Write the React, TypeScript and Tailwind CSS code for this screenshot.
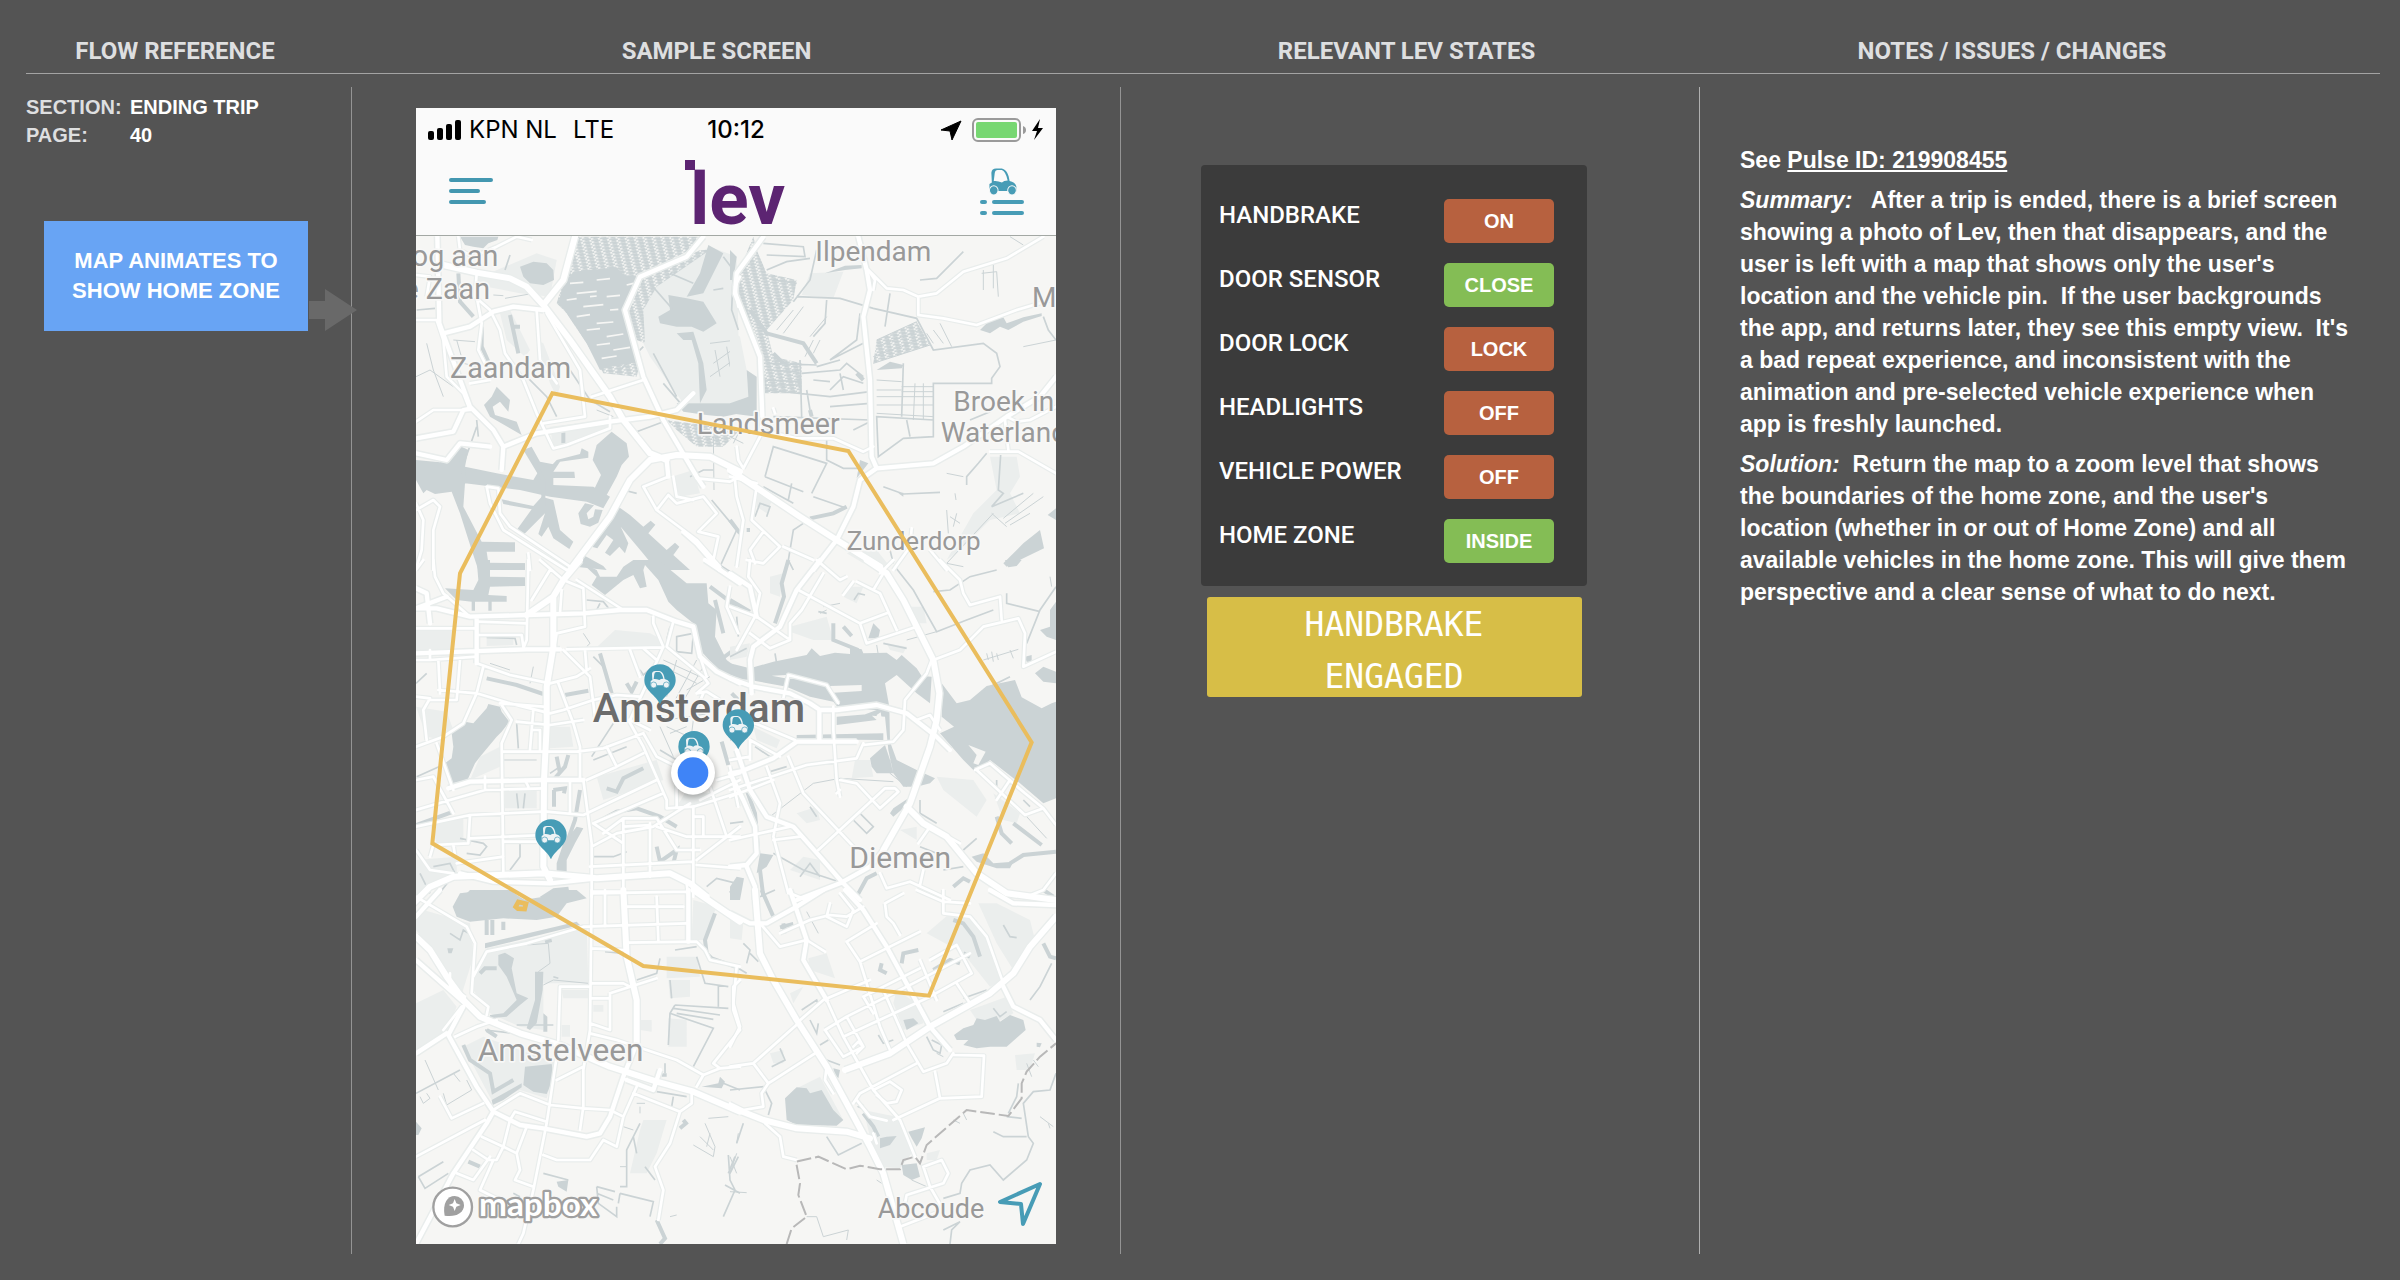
type Tile = {
  at: string;
  park: string;
  water: string;
  hatch?: string;
  hair: string;
  canal: string;
  basin: string;
  highway: string;
  major: string;
  minor: string;
};

// The base map is kept as six tiles, each in its own local coordinates.
const tiles: Tile[] = [
  {
    at: "translate(0 0)",
    park: "M700 340L695 240L740 170L830 90L900 50L980 80L990 520L820 520L770 450L720 380ZM190 150L380 70L440 90L420 200L330 190L230 170ZM420 590L590 570L600 600L480 650L430 655ZM270 250L300 240L360 360L345 380L290 330ZM785 740L850 720L870 790L810 800ZM380 330L400 340L450 470L440 500L420 460Z",
    water:
      "M150 20L265 20L262 30L235 40L220 55L190 50L165 45ZM330 110L370 95L410 100L430 120L432 150L400 165L360 160L340 140ZM745 260L780 240L775 195L830 205L880 215L920 280L880 305L845 290L800 290L750 280ZM800 310L850 305L880 400L890 480L870 520L865 400L845 330L820 330ZM895 45L940 70L910 130L880 190L830 200L870 130ZM800 520L960 520L990 530L990 550L940 560L890 555L820 545ZM260 470L300 510L295 545L270 515L248 530L255 555L320 575L335 615L300 595L240 560L222 525L245 500ZM18 690L90 697L155 650L175 660L165 710L260 730L370 750L382 730L340 660L365 650L390 695L430 703L430 765L550 770L600 800L580 835L530 815L420 800L330 780L165 760L160 830L215 935L315 937L315 965L230 965L235 998L345 1000L345 1020L205 1020L185 960L150 850L125 785L75 792L50 780L40 790L18 750ZM275 808L370 828L395 800L430 810L450 900L490 935L478 957L430 925L415 890L395 920L385 912L405 850L340 915L320 900L365 838L280 822ZM420 712L440 690L510 672L515 655L535 665L535 683L450 695L430 725L493 725L495 744L410 744ZM605 605L650 640L657 680L635 705L620 740L590 795L550 783L573 735L548 690L560 645ZM505 850L525 820L552 826L530 850L535 868L550 860L555 838L578 840L565 878L540 890L512 882ZM625 830L660 855L700 890L722 872L736 884L715 910L770 960L795 938L808 950L790 975L840 1020L740 1020L695 965L632 890L655 940L645 970L628 950L600 978L585 968L610 930L590 915L562 955L545 950L600 880ZM495 1010L520 975L580 1008L590 1020Z",
    hatch:
      "M500 20L880 20L860 50L770 95L690 140L645 240L690 400L680 440L580 430L530 340L470 250L440 220ZM695 150L770 110L870 60L900 60L740 170L700 240L705 340L680 330L655 250ZM770 570L990 600L940 650L860 650L800 600Z",
    hair: "M50 340L70 420L100 500M18 440L60 420L130 470M130 330L195 335M140 330L160 400L205 410M900 340L980 330M910 400L980 350M900 440L985 380M915 360L930 440M950 350L960 410M910 620L912 780M250 195L280 197M285 205L370 190M560 540L610 560",
    canal:
      "M20 240L75 235M200 570L205 620M350 440L410 500L440 560M480 420L540 510L600 545M620 430L700 350M680 605L760 575M905 810L980 900L930 1010M730 370L800 500M760 460L820 530M285 120L300 75M840 740L880 720L910 720M640 780L680 790M165 690L200 590M720 160L790 240M780 130L850 160M910 180L940 175M940 80L970 120L965 240L985 300",
    basin:
      "M145 130L150 215L190 260M215 290L215 350L235 395M460 605L460 640M300 255L325 370M310 290L330 290M375 700L400 750L400 830M150 660L165 760",
    highway:
      "M495 20L460 150L400 225L480 330L600 500L640 570L720 670L770 690M100 105L200 128L300 145L350 170L400 225M480 1020L600 860L660 750L720 690L800 675L900 680L990 725",
    major:
      "M82 20L88 280L110 340L180 530L250 600L280 650L275 720M100 310L180 290L250 245L310 230L400 240M18 625L130 605L160 540L185 535M18 670L110 690L150 640L240 650M280 650L380 610L600 575L720 560L800 540L850 490M880 20L830 80L690 140L645 240L700 440L760 570L860 740L880 770M820 905L860 940L930 1020M770 690L775 740",
    minor:
      "M145 20L150 60L190 80L260 50L320 20L365 30M200 130L195 200L240 240L270 300L285 370L340 450L380 550L430 655L470 645L600 595L600 560M380 240L390 390L440 460M410 250L510 420L525 560L400 580M545 500L700 450M18 270L80 270L100 330L110 440L160 490L180 540L70 540L18 575M775 740L700 770L740 840L860 930L930 1010M740 840L775 795L800 820L880 800L920 850L865 905L925 920L910 990M860 745L960 755L990 740M18 840L70 810L90 830L70 900L70 1020M18 820L40 870L35 960L20 1010M230 770L240 820L280 900L470 1020M230 770L265 775L270 850L300 890L480 1010M355 970L360 1020M990 140L975 170L985 230M200 200L215 280L205 360L240 430M180 460L240 450M790 740L800 800L850 810M18 135L60 140L50 200",
  },
  {
    at: "translate(960 0)",
    park: "M240 130L340 125L310 205L215 195ZM780 680L860 680L870 740L840 790L870 850L780 870L690 960L650 990L730 850L800 780ZM350 970L440 960L480 1010L400 1000ZM0 300L30 320L50 420L55 500L0 520ZM80 790L130 800L110 850L80 830Z",
    water:
      "M0 60L20 80L10 150L0 150ZM50 420L80 440L80 560L0 550L0 520L55 500ZM750 300L780 270L820 262L830 280L880 262L935 250L935 258L880 275L835 300L810 290L780 310ZM820 1000L880 940L930 900L942 955L880 985L830 1010ZM953 855L978 835L978 870ZM440 420L480 395L520 405L515 415ZM285 130L345 107L395 105L395 115L345 120ZM505 790L520 788L520 800ZM390 690L415 700L380 745Z",
    hatch:
      "M70 20L20 140L20 180L50 270L90 390L100 490L215 490L215 400L130 380L110 300L190 210L200 150L110 130L80 60ZM440 330L560 275L600 345L430 400Z",
    hair: "M755 130L800 125L805 200M760 120L760 180M790 105L790 175M590 310L610 340M610 300L640 340M630 280L665 350M650 840L655 910M680 850L670 890M675 790L678 810M650 1000L790 850M820 865L910 790M825 880L940 800M840 885L900 850M785 850L830 890M660 860L690 880M440 330L560 275M440 350L570 300M430 380L590 320M430 400L600 345M515 470L610 470M515 485L610 485M440 450L515 455M440 480L515 480M440 500L610 500M440 525L610 525M440 550L610 560M555 460L550 570M580 460L580 570M0 620L40 640M10 640L30 600M140 300L190 240M160 310L220 230M240 320L290 260M250 370L270 330M225 380L250 330M840 20L880 45M880 350L978 330M650 730L700 740",
    canal:
      "M200 200L330 205L430 235L560 265L610 360L760 340L800 370L810 410L785 445L785 460L610 460L610 620L520 625L445 680L440 560L610 570M260 60L240 150L190 215M100 40L220 50L225 80L110 75M110 120L170 95L240 85M290 210L285 280L250 320M210 390L215 560M100 450L215 455M215 430L330 420L350 400L400 440M110 480L300 500L420 485M300 530L420 520M130 560L420 570M300 480L340 440L400 460M240 540L230 480M390 250L380 330L300 390L400 340M480 190L465 290M520 400L515 560M530 570L540 620M570 150L620 145L700 65M105 740L130 650L290 700L245 790M105 740L220 785M185 760L175 810M100 770L190 820M250 800L350 835M290 620L290 690L340 715L400 715M460 770L520 792L630 787M710 765L710 740L745 700L770 670M812 675L805 780L820 790L785 830L880 790M940 260L955 300L978 330M190 1020L175 990L190 900L220 880M75 860L90 820L120 830L110 860M370 600L430 570M480 960L490 1000M720 570L780 545M110 400L260 405M110 420L200 425M110 465L210 465M330 430L340 480M250 450L300 455M200 160L130 150M260 410L330 390",
    basin:
      "M60 240L110 310L220 340L260 400M240 865L310 850L350 830M240 540L245 560M0 870L30 910M50 900L60 900M380 430L400 450M130 370L160 400",
    highway: "M0 720L90 780L210 860L320 930L450 1010",
    major:
      "M385 20L410 120L420 180L400 260L420 450L425 680L440 715L610 700L700 650L830 560L930 500L978 440M440 715L390 750L370 830L320 930L250 1020M100 20L20 130L15 190L90 380L97 560",
    minor:
      "M97 560L90 620L40 715M415 120L435 150L430 180M415 120L470 175L520 180L565 200L620 190L700 125L830 85L940 20M565 200L565 255L640 265L740 285L860 240L978 205M830 560L860 575L900 570L978 530M825 570L835 660M780 665L865 665L978 730M95 600L200 625L310 625L400 665L430 650M20 650L25 690L40 715M15 750L20 800L40 870L20 1010M80 770L65 870L150 950L100 1000L50 990M0 740L80 760M100 905L60 960L75 1000M160 950L250 990M490 1020L540 950L545 895M600 960L650 1020M130 535L135 550M320 930L400 980",
  },
  {
    at: "translate(0 990)",
    park: "M18 200L130 200L130 270L18 270ZM615 210L720 220L760 240L750 262L560 262ZM18 440L110 455L130 510L100 540L50 530ZM560 650L740 600L760 660L580 720ZM420 500L480 500L490 560L420 565ZM230 230L310 230L310 255L230 258ZM18 900L140 890L140 950L18 1010ZM60 790L160 770L160 850L80 850ZM830 690L900 700L900 730L800 740ZM210 590L270 560L270 620L180 660ZM285 690L380 690L380 745L285 745Z",
    water:
      "M200 0L240 0L240 10L345 10L345 25L240 30L240 50L345 52L345 78L240 80L235 105L290 108L290 125L245 125L245 152L235 152L235 125L195 125L195 152L185 152L185 125L140 120L105 85L190 90L205 60ZM515 8L560 30L570 50L620 50L640 20L670 0L745 0L830 70L890 70L895 130L920 150L915 230L950 300L990 330L990 365L920 325L870 270L850 190L800 150L775 125L745 60L705 15L700 30L710 80L690 85L670 45L640 60L585 105L545 75L560 50ZM190 490L230 445L235 432L270 440L275 455L298 485L275 515L260 530L210 590L195 610L170 665L120 670L105 610L125 595L130 560L125 520L165 485ZM150 1020L180 990L230 990L310 1000L345 1020ZM390 1010L430 985L475 980L480 1010L400 1020ZM440 910L460 850L500 800L520 805L495 850L470 900L470 940L440 935Z",
    hair: "M790 430L860 300M810 440L880 320M830 390L900 350M760 300L870 350M770 480L900 460M770 500L880 550M780 330L860 370M740 440L830 420M800 300L770 410M780 520L830 500M370 320L360 370M520 220L540 250L530 260M850 480L840 560M750 500L790 590M240 310L300 330M280 600L380 600",
    canal:
      "M320 700L325 745M345 700L340 745M230 232L315 235L320 255M150 835L220 850L230 860L210 885L170 880M30 940L60 1000M70 920L120 910L135 940L80 1010M330 850L330 890L300 930M890 980L920 955L980 970M550 890L610 890L650 875M550 290L580 320M800 230L850 220L845 280L800 275ZM860 230L860 270M20 650L110 610M530 120L580 125L600 150M570 130L560 150M750 570L800 600M545 590L610 490M550 600L650 560M320 490L325 565M780 200L770 240M690 330L700 345L740 310M420 640L450 620M18 370L50 340",
    basin:
      "M230 355L320 375L400 402M465 405L535 392M440 590L450 640M475 585L465 620L430 660M432 690L432 740M430 690L465 685L462 700M570 280L605 400M650 370L665 395L680 365M590 685L620 695L640 655L700 625M510 690L495 780L470 850M935 545L955 615M555 790L620 755L680 745L750 770L800 800M20 795L130 755M740 860L750 905L800 870L790 910M900 0L985 55M900 80L980 140M915 120L940 220M930 300L985 260M965 400L985 420",
    highway:
      "M510 0L460 60L430 110L430 260L410 380L410 500L402 660L400 920L420 960M0 1040L60 980L130 950L400 940L560 955L780 940L840 970L890 1010M430 110L350 165",
    major:
      "M18 145L80 145L180 170L350 165L520 160L630 150L710 150L800 185L850 200L870 290L920 335L990 370M18 280L350 268L450 268M115 685L180 665L400 660L520 660M200 170L200 310M150 940L250 965L420 970L560 955M18 85L50 100L60 190M885 0L990 70M18 145L110 110",
    minor:
      "M40 0L18 30M70 0L75 50L100 100L180 170M355 0L350 240L340 265M390 0L460 60L520 85L525 200L440 220L435 250M640 150L500 60M365 120L420 30M455 90L450 160M200 185L350 190M200 225L335 225L340 260M18 205L200 205M200 310L300 345L420 370L500 350L540 325M18 300L60 300L200 290M60 270L60 300M220 320L200 400L160 490L100 530L18 560M85 390L200 400L300 430L420 460L460 450L550 420L620 405L690 410M85 300L90 400M150 300L140 420L60 420M18 410L60 415L40 450L50 540M460 270L540 350L555 470M445 370L490 490L510 560L510 660M320 485L420 495L520 480M370 450L360 570M365 510L390 510L390 570M275 435L305 480L275 550L280 935M275 575L500 575L580 565L700 520M18 660L70 650L130 760M80 550L130 690M18 750L120 720L225 690L400 685M18 800L180 765L400 755M225 650L225 690M355 680L345 660M180 765L175 850L70 855L60 890M130 855L135 885M180 835L400 825M280 845L380 845M18 870L60 930L130 940M140 910L280 890M410 755L520 765L740 660M550 790L690 730L760 700M520 660L545 850L545 1010M530 660L620 620L700 580M590 560L620 620M655 480L700 560L770 720L770 745L850 740L980 700M700 520L740 590L800 620M690 415L660 480L720 510M690 415L720 350L760 260L730 190L730 170M790 185L770 260L880 350L895 370L860 400M470 268L760 262M660 270L690 350M525 270L530 330M870 290L890 350M880 400L850 470M700 265L740 300M545 860L620 820L730 800L840 730M580 820L640 775L740 775L800 870L870 870M550 790L640 850M640 775L640 1010M720 790L720 950M640 800L720 795M740 800L830 830L990 830M850 770L880 770L880 830M850 740L850 900L850 1010M860 900L990 800M550 1000L830 995M540 920L850 905M860 915L990 925M920 660L990 640M900 680L950 830M870 720L990 660M960 620L985 740M480 760L480 660M800 640L800 740M830 970L835 1010M270 430L400 440M960 80L950 140L985 220M860 400L890 395L930 420",
  },
  {
    at: "translate(960 990)",
    park: "M180 200L290 170L310 240L250 240L180 215ZM620 650L730 660L770 720L740 770L640 690ZM375 600L420 600L430 650L365 655ZM540 140L580 140L590 190L560 190ZM790 700L870 760L860 790L820 780ZM470 250L530 260L520 280L480 270ZM510 810L560 800L560 840ZM0 260L60 250L50 290L0 300ZM220 890L270 900L270 960L180 930ZM120 50L160 40L150 110L120 100ZM70 500L150 540L140 565L80 540ZM200 760L260 740L270 780L230 790ZM340 110L360 80L400 80L380 130Z",
    water:
      "M0 310L60 325L130 305L230 285L245 265L270 288L315 278L360 282L360 262L395 268L400 280L470 278L500 300L515 285L560 325L575 348L605 350L600 430L560 400L500 345L465 370L478 440L480 545L500 600L560 630L615 655L600 670L560 680L520 680L490 640L475 570L465 470L400 465L440 450L330 450L310 425L240 410L170 380L60 360L0 355ZM635 370L680 430L720 420L770 378L855 360L875 412L935 445L965 430L978 425L978 715L940 730L870 670L780 600L740 640L700 600L630 520L672 500L635 470ZM200 525L460 520L460 540L200 538ZM320 470L420 462L440 480L320 495ZM420 595L465 555L480 600L490 640L440 640L425 620ZM825 0L875 0L860 18L835 22ZM930 210L960 200L960 150L978 125L978 240L950 230ZM915 340L940 320L978 335L978 370L940 365ZM415 235L430 190L450 210L445 235ZM0 980L20 950L42 955L30 1020L0 1020ZM90 880L130 885L110 920L80 940ZM480 760L490 745L535 715L520 745L490 770ZM725 890L760 880L790 910L850 905L840 925L800 925L740 905ZM885 290L905 285L905 305L890 305Z",
    hair: "M760 300L865 268M770 280L775 300M785 275L790 305M800 280L805 300M840 270L850 295M530 240L620 215M440 255L445 285M120 770L250 670L330 655L490 665M270 160L290 150M280 140L330 130M60 440L110 460M890 770L950 835M480 600L480 640L530 680M960 50L965 80M650 10L700 20",
    canal:
      "M495 20L550 90L620 215L710 180L790 150M610 95L660 90L720 50L800 30M830 100L830 130L930 155M978 80L930 150L890 250M370 780L410 820L430 800L390 760M372 120L385 100L405 105M570 720L570 760L620 790M760 390L840 350M130 880L220 930L340 970M210 950L240 910L270 950M640 930L700 920M880 720L900 740M700 870L740 835M0 790L40 785M120 635L170 620M75 560L120 590M240 740L260 770M90 1010L135 990M570 860L620 880M265 155L290 160M135 280L140 310M460 250L530 265M800 660L800 680M0 540L40 530M20 170L25 230M0 290L50 265",
    basin:
      "M175 0L155 70L162 110L135 190M310 190L310 240L385 270M340 200L365 228M0 120L60 155M50 690L75 760L85 880M850 790L935 855M840 910L880 885L978 875M380 1010L410 955L440 940M670 980L700 955L720 965M90 930L100 1010M800 770L815 820L845 850M160 340L250 360",
    highway:
      "M410 0L470 40L520 120L560 200L610 300L628 400L620 480L600 560L540 730L460 870M530 740L580 790L650 830L740 940L830 1000L978 1020",
    major:
      "M270 0L200 90L150 200L70 260L60 300L65 400M0 355L70 380L180 400L240 430L270 450L320 450L440 435L530 460L620 530L660 570M0 40L60 80L80 170M0 640L30 635L130 595L200 545L380 545M20 570L60 690L110 770L190 800L270 890L340 970L390 1020M0 920L50 915L80 880L75 800L40 720L0 640M50 920L75 980L75 1020M200 1020L330 970L420 920L460 870M268 450L268 540",
    minor:
      "M0 140L80 170L180 240L120 265L60 220M260 0L330 60L350 50M60 0L55 50L90 100L75 170L20 270M205 90L390 190L410 250L560 200M390 190L470 160M340 105L370 65M380 65L450 100L500 210M460 40L430 90M280 40L215 150L180 190L180 240M490 0L450 40M630 0L690 60L700 100L720 135L810 110L815 180M610 300L690 270L760 200L865 175L885 220L880 320L978 275M160 415L175 345L290 375L325 430M310 440L310 510L320 660L330 710M605 300L590 340L525 420L520 510L490 545L400 555M560 480L600 465L630 510M400 550L380 595L230 615L0 690M110 620L150 730L130 830L175 1000M175 590L220 700L380 870M330 660L380 670L450 745L505 695L495 685L465 685L265 870M0 840L180 800M130 840L210 830M0 710L130 660M60 540L150 590M75 490L195 540M735 630L780 610L885 700L940 745L885 765L740 630M800 720L840 660M940 745L978 795M565 850L600 800L690 850M450 940L470 985L540 965L660 1020M570 975L580 930M60 540L60 600M0 600L60 590M180 1000L230 1020M978 940L940 990L890 1010M330 690L320 700",
  },
  {
    at: "translate(0 1980)",
    park: "M40 60L180 100L190 200L150 330L90 210L18 120L18 80ZM230 175L530 110L535 280L400 280L400 420L330 410L240 370L190 300L195 230ZM18 340L100 300L140 350L110 420L18 490ZM770 200L860 200L870 260L770 265ZM775 270L840 270L840 320L780 325ZM775 385L830 390L830 470L775 470ZM455 300L535 300L535 325L460 325ZM160 470L220 440L440 520L410 625L330 600L250 640ZM700 690L770 690L740 790L710 850L660 850L690 720ZM850 30L920 50L880 150L845 150ZM690 390L725 390L725 425L690 420ZM550 345L580 345L580 365L550 365ZM455 405L480 405L480 440L455 440Z",
    water:
      "M128 50L150 10L230 0L300 0L340 30L400 20L440 0L500 0L530 25L470 40L440 80L380 90L280 85L180 95L140 80ZM225 160L500 95L510 105L225 175ZM265 195L285 188L312 205L305 235L320 310L355 325L330 345L290 380L240 385L240 375L280 370L320 330L290 260L265 225ZM375 245L400 245L398 300L380 400L360 420L350 415L375 330ZM345 530L425 522L432 560L410 612L370 605L340 585ZM245 630L290 605L335 580L335 592L280 630L248 645ZM112 175L130 175L125 190L115 190ZM875 590L925 580L930 560L945 575L935 595ZM400 370L412 380L412 425L400 425ZM18 695L35 715L25 735L18 735ZM440 875L475 870L470 905L445 890ZM755 550L770 550L770 560L755 560Z",
    hair: "M100 610L110 645L185 600L170 570M30 620L40 640L60 625L50 610M45 510L85 600M130 550L150 575M400 285L430 270L535 280M885 700L915 770L910 800L850 765M870 740L910 780M900 730L890 770M780 980L800 975M680 640L705 640M690 650L690 670M630 830L650 830M350 165L415 160L420 220L385 245M895 685L955 680M985 730L980 760M640 710L670 720M90 240L95 245",
    canal:
      "M120 130L150 150L160 120L190 140M18 610L150 540M680 270L740 250L750 205M780 270L785 325M780 370L910 415L850 530M795 345L955 355M795 345L780 370L775 465M790 355L930 375M800 370L910 388M860 200L885 280L955 290M925 285L925 350M740 605L830 620M790 620L785 650M690 700L650 780L650 890L630 890M670 740L680 790M955 795L960 870L975 900L940 980M975 800L955 850M985 800L960 850M400 850L475 870M560 890L615 905M560 910L610 930M630 910L730 935L720 980M560 890L565 940L620 980L620 950M630 910L625 940M25 860L100 815M25 860L45 895L115 850M705 830L735 870M795 180L860 170M430 260L445 265M320 405L430 405M765 520L765 550M940 580L990 600M225 420L310 430M310 910L330 920M585 185L640 190M945 885L990 910",
    basin:
      "M230 90L230 135M247 90L247 135M280 95L280 120M160 465L180 510L240 550L250 605L310 570M890 190L885 150L915 70M890 190L905 205L990 235M175 815L210 830M740 990L765 1045L750 1062M210 250L225 235L260 235M405 155L425 150M820 690L828 700L810 715M230 420L260 440",
    highway:
      "M18 140L60 180L110 260L165 335L210 380L330 430L450 465L600 530L740 575L850 605L990 665M850 0L990 95M640 0L650 200L680 330L680 460",
    major:
      "M18 210L165 340M680 460L640 560L600 680L570 730L530 740L400 715L330 705L250 665L200 590L115 435L160 350M18 80L90 0M250 665L230 700L130 850L18 1062M18 490L110 430M650 570L730 600L750 540M835 0L835 155",
    minor:
      "M18 20L170 110L195 160L185 310L235 350L230 375M190 260L230 185L350 160L520 110L830 100M545 0L540 420L520 540L520 650L510 720M545 5L640 5M585 0L585 110M740 20L745 150M650 50L820 50M650 158L860 155L885 180L900 210L990 230M545 175L640 180M545 280L640 280L660 290M600 310L600 420L540 400M545 325L600 325M535 290L450 290L445 450M600 310L740 265M540 430L620 450L800 510L880 555L860 590M990 270L970 290L970 360L990 420L910 520L930 535L990 530M135 440L200 410L260 390M440 570L520 530M440 500L410 700L370 900L340 1030L325 1062M250 660L330 610L420 645L520 655L600 660L640 680L620 770L580 750L540 810L440 810L400 795M300 690L315 665L410 695M350 710L320 790L330 840L315 870L370 890M215 740L280 770L260 810L235 810L190 780M240 800L190 870L140 850M280 770L300 690M320 790L280 770M250 810L210 900L310 950M18 800L225 690M90 620L125 685L220 640M680 590L640 680M670 610L810 665L845 640L845 600M810 665L780 760L735 830L760 900L745 990M155 350L100 420M120 250L120 290L165 320M880 555L930 535",
  },
  {
    at: "translate(960 1980)",
    park: "M745 40L800 40L900 90L915 150L850 240L800 160ZM720 360L830 320L850 370L760 420ZM235 205L290 190L315 265L240 240ZM400 660L500 680L545 790L510 835L450 830L420 740ZM190 600L270 560L340 690L300 700ZM855 495L915 490L900 540L860 540ZM500 300L560 340L580 400L520 420L490 340ZM0 90L40 100L35 150L0 145ZM660 70L740 90L790 180L820 270L780 290L700 190L590 130ZM120 490L160 480L160 520L130 520ZM180 310L220 290L190 340ZM590 790L630 780L620 810L590 810Z",
    water:
      "M165 625L200 592L230 595L240 610L275 600L310 660L340 690L320 707L200 705L170 690ZM672 435L700 415L730 405L740 385L765 390L800 378L810 395L840 375L880 390L887 420L830 470L780 470L740 475L700 465L715 450L680 450ZM515 825L560 820L570 860L545 870L520 855ZM520 390L550 385L565 400L530 420ZM380 650L400 643L400 660ZM920 458L935 460L930 472L920 470ZM450 745L470 740L500 738L480 765L450 775ZM535 725L585 712L575 745L560 770L545 745ZM310 535L330 540L325 565L315 555Z",
    hair: "M0 905L50 908M0 800L20 850M20 790L0 850M930 680L970 710M955 700L960 715M230 980L260 980L280 1040L355 1020L350 1050M670 690L690 700M700 670L710 690M440 870L455 880M545 870L590 890M890 520L905 560M910 510L925 530M230 65L265 130M620 490L640 500",
    canal:
      "M0 600L100 590L125 640L115 675M640 365L700 340M700 325L770 300M965 220L930 290L900 330M820 105L840 140L860 143M0 220L50 250M40 160L60 180L50 220M60 190L85 215M215 360L260 330L265 345L230 370M240 390L260 430L265 400M125 530L165 510L150 475M290 740L325 795L395 760M978 550L960 600L910 605L880 640L895 740L910 760L890 810L820 870L780 825L720 840L695 880L690 910L640 925M790 725L820 740L890 740M830 680L875 685M40 700L20 760M100 700L150 740L155 790M660 1062L665 1020L690 995L640 1020M590 440L610 480L630 490L635 465L605 450M445 435L460 460L490 450M270 465L295 450M790 355L810 380L830 365M865 580L860 620L835 670M290 510L330 525",
    basin:
      "M95 0L130 80M150 112L190 102M160 100L165 130M400 670L430 710L445 740M455 220L450 240L470 250M515 220L520 190L565 180M670 90L700 100L730 140L750 200M610 240L660 210L690 220M700 190L720 200M940 160L960 200L978 205M0 10L20 0M940 0L970 20",
    highway:
      "M75 0L90 190L130 270L200 390L290 530L350 640L420 770L460 850L520 1062M345 540L480 490L600 410L780 310L850 250L900 170L978 80M0 650L100 690L200 715L350 725L420 745",
    major:
      "M345 0L400 60L470 170L600 410L660 480M0 70L60 100L110 100L200 50L280 0M820 290L850 350L930 390L978 450M780 0L850 40L978 45M180 0L230 150L220 210L290 330",
    minor:
      "M290 330L340 440L430 600L510 690L555 800M90 100L150 170L230 150L285 185M150 130L240 90L300 75L350 80L400 50M205 395L280 330L420 270M285 420L340 500L400 470L350 380M285 420L350 380L560 275L720 190M340 440L600 320L725 250L680 165L600 210M350 155L390 215L450 410L480 480M350 155L440 100M390 215L570 125M460 300L530 460L580 545L650 520L670 490M400 320L570 235M400 320L430 370M570 210L620 330M680 280L720 340M370 470L385 455L400 470L380 490M0 530L70 520L205 400M70 520L115 580L255 490M115 580L95 610L100 650L40 660L0 640M490 690L630 625L755 620L762 497L670 495M615 545L630 625M370 640L390 610L560 520M430 600L480 575L515 600L500 635L470 640L440 615M380 630L420 680L470 692M525 940L530 915L640 880L655 850L635 810L580 830L600 890L640 960L510 1010M640 0L640 70L720 80L770 140L820 280M560 0L640 35L720 40M465 40L470 80L490 100L510 135M465 40L520 10M300 40L290 80L350 110L370 60L330 10M20 230L10 340L30 410L0 470M105 700L150 740L160 800L200 810M430 730L440 760M290 530L285 570L310 610",
  },
];

const roadPasses = [
  { key: "minor", halo: 15, width: 8 },
  { key: "major", halo: 22, width: 13 },
  { key: "highway", halo: 26, width: 18 },
] as const;

const places = [
  { name: "oog aan", x: 265, y: 108, size: 86, end: true },
  { name: "e Zaan", x: 240, y: 207, size: 86, end: true },
  { name: "Zaandam", x: 120, y: 445, size: 86 },
  { name: "Landsmeer", x: 860, y: 612, size: 86 },
  { name: "Ilpendam", x: 1216, y: 93, size: 84 },
  { name: "Mo", x: 1866, y: 230, size: 84 },
  { name: "Broek in", x: 1630, y: 543, size: 84 },
  { name: "Waterland", x: 1592, y: 637, size: 84 },
  { name: "Zunderdorp", x: 1310, y: 960, size: 78 },
  { name: "Diemen", x: 1318, y: 1913, size: 90 },
  { name: "Amstelveen", x: 203, y: 2493, size: 95 },
  { name: "Abcoude", x: 1403, y: 2963, size: 81 },
];

const pins = [
  { x: 750, y: 1350 },
  { x: 985, y: 1485 },
  { x: 852, y: 1550 },
  { x: 423, y: 1815 },
];

const states = [
  { label: "HANDBRAKE", value: "ON", good: false },
  { label: "DOOR SENSOR", value: "CLOSE", good: true },
  { label: "DOOR LOCK", value: "LOCK", good: false },
  { label: "HEADLIGHTS", value: "OFF", good: false },
  { label: "VEHICLE POWER", value: "OFF", good: false },
  { label: "HOME ZONE", value: "INSIDE", good: true },
];

const Car = ({ ring }: { ring: string }) => (
  <g>
    <path
      fillRule="evenodd"
      d="M3 44L3 31L8 28L7 9Q8 1 17 1L29 1Q39 3 43 16L45 25Q56 27 59 35L59 44ZM12 25L14 10Q15 4 20 4L29 4Q37 7 41 24Q33 24 29 28Q20 24 12 25Z"
    />
    <circle cx="12" cy="43" r="9" stroke={ring} strokeWidth="2" />
    <circle cx="50" cy="43" r="9" stroke={ring} strokeWidth="2" />
  </g>
);

const MapView = () => (
  <div className="relative">
    <svg viewBox="18 18 1920 3024" className="block w-full bg-[#f6f6f4] font-['Roboto',sans-serif]">
      <defs>
        <pattern id="polder" width="26" height="10" patternUnits="userSpaceOnUse" patternTransform="rotate(-14)">
          <path d="M0 3H21M7 8H26" stroke="#cbd3d5" strokeWidth="5" fill="none" />
        </pattern>
        <filter id="soft" x="-50%" y="-50%" width="200%" height="200%">
          <feGaussianBlur stdDeviation="10" />
        </filter>
      </defs>

      {tiles.map((t) => (
        <g key={t.at} transform={t.at}>
          <path d={t.park} fill="#ebeeed" />
          {t.hatch && <path d={t.hatch} fill="url(#polder)" />}
          <path d={t.water} fill="#cbd3d5" />
          <g fill="none" stroke="#cbd3d5">
            <path d={t.hair} strokeWidth="3" />
            <path d={t.canal} strokeWidth="5" />
            <path d={t.basin} strokeWidth="12" />
          </g>
        </g>
      ))}

      {/* solid part of the polder north of Zaandam */}
      <path
        d="M490 125L620 112L640 135L688 142L650 200L640 260L690 395L600 410L570 420L530 340L470 250L445 220L455 180Z"
        fill="#cbd3d5"
      />
      <path
        d="M480 160L520 157M560 150L600 146M500 190L560 184M590 200L630 196M470 210L500 206M520 230L580 224M600 240L625 238M500 260L540 254M560 280L610 276M530 300L570 296M590 320L640 312M560 345L600 340M610 360L660 352M575 385L620 378M540 200L560 198M650 165L670 160"
        stroke="#f6f6f4"
        strokeWidth="5"
        fill="none"
      />
      {/* land inside the eastern harbour */}
      <path
        d="M1260 1368L1355 1365L1355 1383L1270 1388ZM1085 1337L1130 1335L1125 1345ZM1675 1545L1727 1565L1705 1605L1690 1600L1700 1575ZM1400 1455L1412 1447L1420 1495L1405 1500Z"
        fill="#f6f6f4"
      />

      {roadPasses.map(({ key, halo }) => (
        <g key={key} fill="none" stroke="#e9edec" strokeWidth={halo} strokeLinejoin="round">
          {tiles.map((t) => (
            <path key={t.at} transform={t.at} d={t[key]} />
          ))}
        </g>
      ))}
      {roadPasses.map(({ key, width }) => (
        <g key={key} fill="none" stroke="#ffffff" strokeWidth={width} strokeLinejoin="round" strokeLinecap="round">
          {tiles.map((t) => (
            <path key={t.at} transform={t.at} d={t[key]} />
          ))}
        </g>
      ))}

      <path
        d="M1130 3042L1145 2995L1190 2960L1165 2895L1170 2860L1158 2795L1225 2780L1310 2818L1350 2807L1410 2818L1470 2818L1480 2790L1515 2780L1530 2800L1550 2745L1670 2640L1795 2658L1835 2605L1835 2560L1850 2525L1890 2480L1938 2440"
        fill="none"
        stroke="#b8b8b8"
        strokeWidth="6"
        strokeDasharray="44 12"
      />

      <g stroke="#f8f8f7" strokeWidth="10" strokeLinejoin="round" paintOrder="stroke">
        {places.map((p) => (
          <text key={p.name} x={p.x} y={p.y} fontSize={p.size} fill="#999999" textAnchor={p.end ? "end" : "start"}>
            {p.name}
          </text>
        ))}
        <text x="548" y="1477" fontSize="122" fontWeight="500" fill="#6c6c6c">
          Amsterdam
        </text>
      </g>

      {/* home zone */}
      <path
        d="M427 490L1315 663L1865 1537L1557 2297L700 2208L67 1840L150 1030Z"
        fill="none"
        stroke="#eabd5d"
        strokeWidth="12"
      />
      <path d="M317 2030L325 2016L348 2021L344 2037L324 2036Z" fill="none" stroke="#eabd5d" strokeWidth="14" />

      {pins.map((p) => (
        <g key={p.y} transform={`translate(${p.x} ${p.y})`}>
          <path d="M0 73C-12 45-47 32-47 0A47 47 0 0 1 47 0C47 32 12 45 0 73Z" fill="#479cb6" />
          <g transform="translate(-31 -28)" fill="#eef3f5">
            <Car ring="#479cb6" />
          </g>
        </g>
      ))}

      <circle cx="849" cy="1636" r="68" fill="#000000" opacity="0.3" filter="url(#soft)" />
      <circle cx="849" cy="1628" r="66" fill="#ffffff" />
      <circle cx="849" cy="1628" r="46" fill="#3f84f7" />

      <circle cx="128" cy="2931" r="58" fill="#ffffff" stroke="#a0a0a0" strokeWidth="7" />
      <path d="M104 2957C97 2920 112 2898 134 2898A28 28 0 0 1 162 2926C162 2948 138 2963 104 2957Z" fill="#a0a0a0" />
      <path d="M134 2907L139 2920L152 2925L139 2930L134 2943L129 2930L116 2925L129 2920Z" fill="#ffffff" />
      <text
        x="207"
        y="2958"
        fontSize="100"
        fontWeight="700"
        fill="#ffffff"
        stroke="#a0a0a0"
        strokeWidth="14"
        strokeLinejoin="round"
        paintOrder="stroke"
        className="font-['Lato',sans-serif]"
      >
        mapbox
      </text>
    </svg>

    <button type="button" aria-label="Center on my location" className="absolute right-3 bottom-4 size-12">
      <svg viewBox="0 0 48 48" fill="none" stroke="#479cb6" strokeWidth="4" strokeLinejoin="round">
        <path d="M44 4L4 22L25 24L27 44Z" />
      </svg>
    </button>
  </div>
);

const Phone = () => (
  <section className="w-[640px] bg-[#fafafa] text-black" aria-label="Lev app">
    <div className="grid h-10 grid-cols-3 items-center px-3 pt-1 font-['Inter',sans-serif] text-2xl leading-8">
      <div className="flex items-center gap-2">
        <svg width="33" height="20" viewBox="0 0 33 20">
          <rect y="11" width="6" height="9" rx="2" />
          <rect x="9" y="8" width="6" height="12" rx="2" />
          <rect x="18" y="4" width="6" height="16" rx="2" />
          <rect x="27" width="6" height="20" rx="2" />
        </svg>
        <span className="whitespace-nowrap">KPN NL</span>
        <span className="ml-2">LTE</span>
      </div>
      <span className="text-center font-medium">10:12</span>
      <svg width="104" height="24" viewBox="0 0 104 24" className="justify-self-end">
        <path d="M21 3L1 12L10 13L12 22Z" stroke="#000000" strokeLinejoin="round" />
        <rect x="33" y="1" width="47" height="22" rx="5" fill="none" stroke="#9a9a9a" strokeWidth="2" />
        <rect x="36" y="4" width="41" height="16" rx="2" fill="#77d772" />
        <path d="M83 8Q86 9 86 12Q86 15 83 16Z" fill="#9a9a9a" />
        <path d="M100 1L92 13H97L94 22L103 10H98Z" />
      </svg>
    </div>

    <div className="flex h-[88px] items-center justify-between border-b border-[#a3a8a4] px-8">
      <button type="button" aria-label="Menu">
        <svg width="46" height="28" viewBox="0 0 46 28" stroke="#4397b0" strokeWidth="4" strokeLinecap="round">
          <path d="M3 2H43M3 13H30M3 24H36" />
        </svg>
      </button>
      <svg width="104" height="104" viewBox="0 -20 104 104" fill="#5c2472" className="font-['Roboto',sans-serif]">
        <rect width="10" height="10" />
        <text x="5" y="64" fontSize="73" fontWeight="700">
          lev
        </text>
      </svg>
      <button type="button" aria-label="Vehicle list">
        <svg width="44" height="48" viewBox="0 0 44 48" fill="#479cb6">
          <g transform="translate(8 0) scale(.48 .52)">
            <Car ring="#fafafa" />
          </g>
          <path d="M2 34H5M14 34H42M2 45H5M14 45H42" stroke="#479cb6" strokeWidth="4" strokeLinecap="round" />
        </svg>
      </button>
    </div>

    <MapView />
  </section>
);

const App = () => (
  <div className="min-h-screen bg-[#545454] pr-5 pl-[26px] font-['Liberation_Sans',Arial,sans-serif] text-white">
    <header className="grid h-[74px] grid-cols-[326fr_769fr_579fr_680fr] items-end border-b border-[#a4a4a4] pb-2 text-center font-['Roboto',sans-serif] text-2xl leading-7 font-bold text-[#dedfe0]">
      <h2 className="pr-7">FLOW REFERENCE</h2>
      <h2 className="pr-10">SAMPLE SCREEN</h2>
      <h2 className="pr-2">RELEVANT LEV STATES</h2>
      <h2 className="pr-14">NOTES / ISSUES / CHANGES</h2>
    </header>

    <main className="mt-[13px] grid grid-cols-[326fr_769fr_579fr_680fr]">
      <div className="min-w-0 border-r border-[#949494] pt-[6px]">
        <dl className="grid grid-cols-[104px_1fr] text-xl leading-7 font-bold">
          <dt className="text-[#dedfe0]">SECTION:</dt>
          <dd>ENDING TRIP</dd>
          <dt className="text-[#dedfe0]">PAGE:</dt>
          <dd>40</dd>
        </dl>
        <div className="mt-[72px] flex items-end pl-[18px]">
          <p className="flex h-[110px] w-[264px] shrink-0 items-center justify-center bg-[#68a4f4] text-center text-[22px] leading-[30px] font-bold">
            MAP ANIMATES TO
            <br />
            SHOW HOME ZONE
          </p>
          <svg width="49" height="42" viewBox="0 0 49 42" fill="#696969" className="relative shrink-0">
            <path d="M1 12H17V0L49 21L17 42V30H1Z" />
          </svg>
        </div>
      </div>

      <div className="flex justify-center border-r border-[#949494] pt-[21px] pb-[10px]">
        <Phone />
      </div>

      <div className="flex flex-col items-center border-r border-[#b0b0b0] pt-[78px] pr-8">
        <ul className="flex w-[386px] flex-col gap-5 rounded bg-[#3b3b3b] pt-[34px] pr-[33px] pb-[23px] pl-[18px]">
          {states.map(({ label, value, good }) => (
            <li key={label} className="flex items-start justify-between">
              <span className="font-['Roboto',sans-serif] text-2xl leading-8 font-medium">{label}</span>
              <button
                type="button"
                className={`h-11 w-[110px] rounded-[5px] text-xl font-bold ${good ? "bg-[#84bd55]" : "bg-[#b7613f]"}`}
              >
                {value}
              </button>
            </li>
          ))}
        </ul>
        <p className="mt-[11px] h-[100px] w-[375px] rounded-[3px] bg-[#d7be47] pt-0.5 text-center font-['DejaVu_Sans_Mono',monospace] text-[33px] leading-[52px]">
          HANDBRAKE
          <br />
          ENGAGED
        </p>
      </div>

      <div className="flex flex-col gap-2 pt-[57px] pl-10 text-[23px] leading-8 font-bold whitespace-pre">
        <p>
          See{" "}
          <a href="#pulse-219908455" className="underline underline-offset-2">
            Pulse ID: 219908455
          </a>
        </p>
        <p>
          <em>Summary:</em>
          {"   After a trip is ended, there is a brief screen\n"}
          {"showing a photo of Lev, then that disappears, and the\n"}
          {"user is left with a map that shows only the user's\n"}
          {"location and the vehicle pin.  If the user backgrounds\n"}
          {"the app, and returns later, they see this empty view.  It's\n"}
          {"a bad repeat experience, and inconsistent with the\n"}
          {"animation and pre-selected vehicle experience when\n"}
          {"app is freshly launched."}
        </p>
        <p>
          <em>Solution:</em>
          {"  Return the map to a zoom level that shows\n"}
          {"the boundaries of the home zone, and the user's\n"}
          {"location (whether in or out of Home Zone) and all\n"}
          {"available vehicles in the home zone. This will give them\n"}
          {"perspective and a clear sense of what to do next."}
        </p>
      </div>
    </main>
  </div>
);

export default App;
